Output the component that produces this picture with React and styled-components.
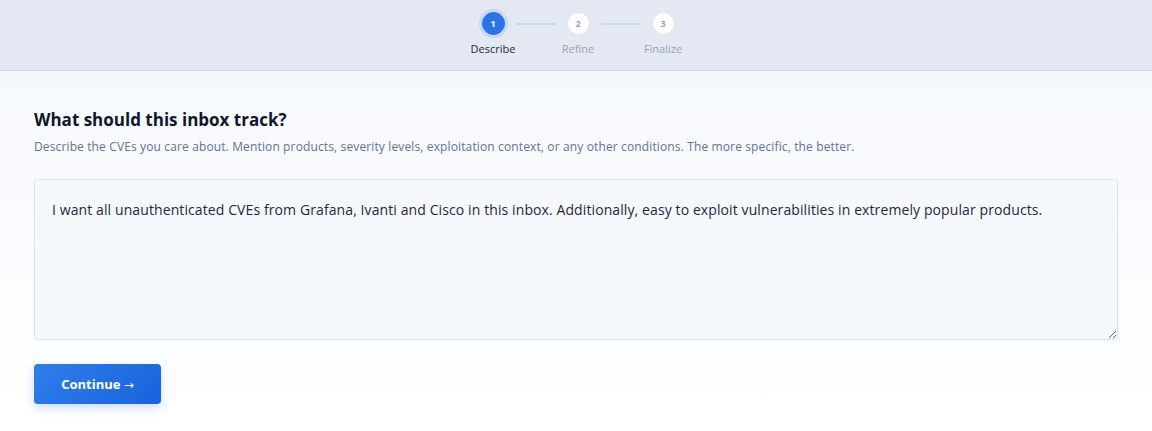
import React from "react"
import styled, { createGlobalStyle } from "styled-components"

const GlobalStyle = createGlobalStyle`
  html, body {
    margin: 0;
    padding: 0;
    background: #ffffff;
    font-family: "Open Sans", "Noto Sans", sans-serif;
  }
  * {
    box-sizing: border-box;
  }
`

const Page = styled.div`
  width: 1152px;
  min-height: 431px;
  display: flex;
  flex-direction: column;
  background: #ffffff;
`

const StepBar = styled.header`
  height: 71px;
  background: #e4e8f3;
  border-bottom: 1px solid #d4dae8;
  display: flex;
  justify-content: center;
  padding-top: 12px;
`

const Steps = styled.div`
  display: flex;
  align-items: flex-start;
  margin-left: 4px;
`

const Step = styled.div`
  width: 45px;
  display: flex;
  flex-direction: column;
  align-items: center;
  gap: 6px;
`

const Dot = styled.div`
  width: 23px;
  height: 23px;
  border-radius: 50%;
  display: flex;
  align-items: center;
  justify-content: center;
  font-size: 9px;
  font-weight: 700;
  color: ${({ $active }) => ($active ? "#ffffff" : "#94a3b8")};
  background: ${({ $active }) => ($active ? "#2b74e6" : "#ffffff")};
  border: 1px solid ${({ $active }) => ($active ? "#2b74e6" : "#dbe3ef")};
  box-shadow: ${({ $active }) =>
    $active ? "0 0 0 3px #c7d8f3" : "none"};
`

const StepLabel = styled.span`
  font-size: 11px;
  font-weight: 500;
  white-space: nowrap;
  color: ${({ $active }) => ($active ? "#1e293b" : "#94a3b8")};
`

const Connector = styled.div`
  width: 40px;
  height: 2px;
  margin-top: 11px;
  background: #c8d7ec;
`

const Content = styled.main`
  flex: 1;
  padding: 37px 34px 27px;
  background: linear-gradient(180deg, #f5f8fd 0%, #ffffff 100%);
`

const Title = styled.h2`
  margin: 0;
  font-size: 17px;
  font-weight: 700;
  color: #0f172a;
  line-height: 24px;
`

const Hint = styled.p`
  margin: 6px 0 0;
  font-size: 12px;
  letter-spacing: 0.13px;
  color: #64748b;
  line-height: 18px;
`

const Prompt = styled.textarea`
  display: block;
  width: 100%;
  height: 161px;
  margin-top: 23px;
  padding: 20px 17px;
  border: 1px solid #dbe3ee;
  border-radius: 4px;
  background: #f5f8fd;
  font-family: "Open Sans", "Noto Sans", sans-serif;
  font-size: 14px;
  letter-spacing: 0.1px;
  line-height: 20px;
  color: #1e293b;
  resize: vertical;
  outline: none;
`

const ContinueButton = styled.button`
  margin-top: 24px;
  width: 127px;
  height: 40px;
  border: none;
  border-radius: 4px;
  background: linear-gradient(135deg, #2f7fea 0%, #1862dc 100%);
  color: #ffffff;
  font-family: "Open Sans", "Noto Sans", sans-serif;
  font-size: 13px;
  font-weight: 700;
  box-shadow: 0 4px 10px rgba(37, 99, 235, 0.22);
  cursor: pointer;
`

const Arrow = styled.span`
  font-family: "DejaVu Sans", sans-serif;
  font-weight: 400;
  font-size: 12px;
`

const steps = [
  { n: 1, label: "Describe" },
  { n: 2, label: "Refine" },
  { n: 3, label: "Finalize" },
]

const App = () => {
  const current = 1

  return (
    <Page>
      <GlobalStyle />
      <StepBar>
        <Steps>
          {steps.map((step, i) => (
            <React.Fragment key={step.n}>
              {i > 0 && <Connector />}
              <Step>
                <Dot $active={step.n === current}>{step.n}</Dot>
                <StepLabel $active={step.n === current}>{step.label}</StepLabel>
              </Step>
            </React.Fragment>
          ))}
        </Steps>
      </StepBar>

      <Content>
        <Title>What should this inbox track?</Title>
        <Hint>
          Describe the CVEs you care about. Mention products, severity levels,
          exploitation context, or any other conditions. The more specific, the
          better.
        </Hint>
        <Prompt defaultValue="I want all unauthenticated CVEs from Grafana, Ivanti and Cisco in this inbox. Additionally, easy to exploit vulnerabilities in extremely popular products." />
        <ContinueButton>
          Continue <Arrow>→</Arrow>
        </ContinueButton>
      </Content>
    </Page>
  )
}

export default App
